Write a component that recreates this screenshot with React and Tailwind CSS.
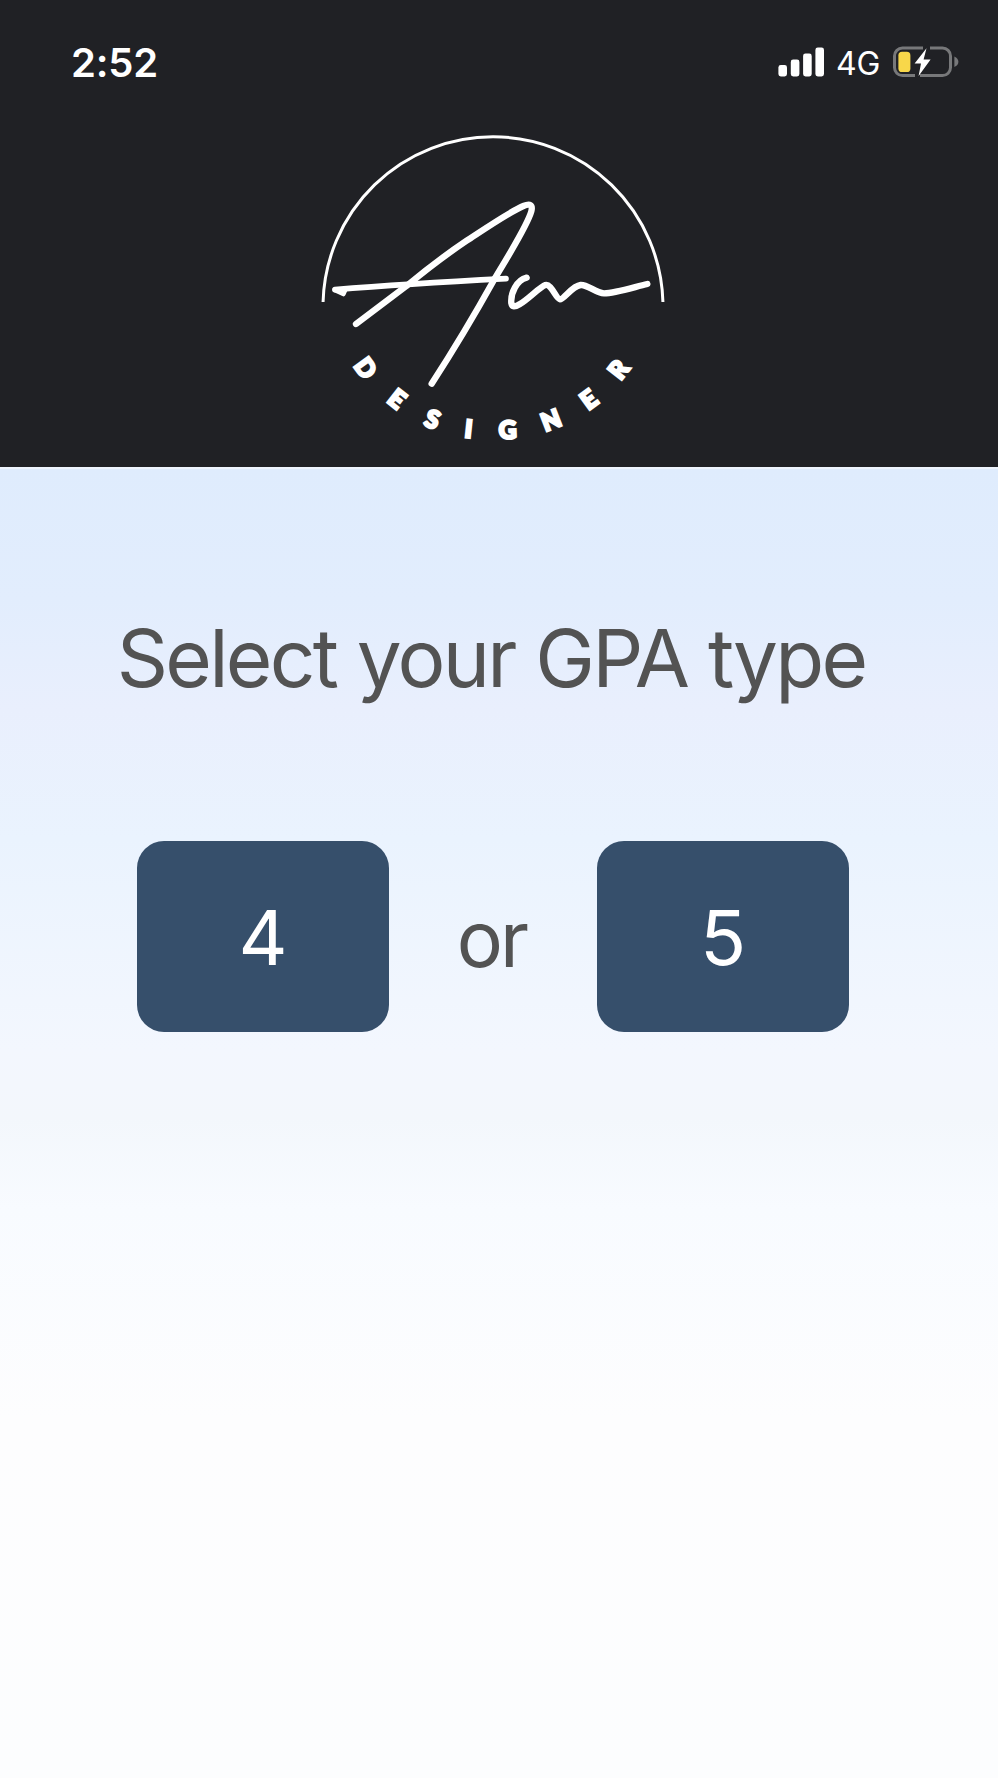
import React, { useState } from "react";

const gpaTypes = ["4", "5"];

const designerLetters = [
  { char: "D", x: 167, y: 744, rotate: 54 },
  { char: "E", x: 261, y: 836, rotate: 38 },
  { char: "S", x: 368, y: 897, rotate: 21 },
  { char: "I", x: 476, y: 926, rotate: 6 },
  { char: "G", x: 593, y: 929, rotate: -2 },
  { char: "N", x: 723, y: 900, rotate: -21 },
  { char: "E", x: 836, y: 838, rotate: -36 },
  { char: "R", x: 925, y: 748, rotate: -52 },
];

const SignalIcon = () => (
  <svg viewBox="0 0 46 30" className="h-[30px] w-[46px]" fill="#fff">
    <rect x="0.4" y="18" width="8.6" height="11.5" rx="2.4" />
    <rect x="12.8" y="12.5" width="8.6" height="17" rx="2.4" />
    <rect x="25.1" y="6.5" width="8.6" height="23" rx="2.4" />
    <rect x="37.4" y="0.5" width="8.6" height="29" rx="2.4" />
  </svg>
);

const BatteryIcon = () => (
  <svg viewBox="0 0 68 34" className="h-[34px] w-[68px]" fill="none">
    <path
      d="M23 30.6H10.5A8 8 0 0 1 2.5 22.6V11A8 8 0 0 1 10.5 3H31M38 3H50.5A8 8 0 0 1 58.5 11V22.6A8 8 0 0 1 50.5 30.6H28"
      stroke="#77787a"
      strokeWidth="3"
    />
    <path d="M62.4 11.5C64.8 12.5 66.4 14.5 66.4 16.8S64.8 21.1 62.4 22Z" fill="#77787a" />
    <rect x="6.4" y="6.8" width="12" height="20.2" rx="3.6" fill="#f8d74a" />
    <path d="M34.5 3.2L22.6 18.6H29L26.6 31L38.6 14.6H31.6Z" fill="#fff" />
  </svg>
);

const StatusBar = () => (
  <div className="flex h-[124px] items-start justify-between pl-[71px] pr-[38px] text-white">
    <span className="mt-[33px] text-[40px] font-semibold leading-[60px] tracking-[-0.2px]">2:52</span>
    <div className="mt-[45px] flex h-[34px] items-center">
      <SignalIcon />
      <span className="mx-[12px] pt-[3px] text-[32px] leading-[34px] tracking-[-0.3px]">4G</span>
      <BatteryIcon />
    </div>
  </div>
);

const Logo = () => (
  <svg viewBox="0 0 1110 1020" className="mx-auto h-[340px] w-[370px]" fill="none" stroke="#fff">
    {/* Upper half circle */}
    <path d="M39.2 546A510 510 0 0 1 1058.8 546" strokeWidth="9" />

    {/* Signature */}
    <g strokeWidth="19" strokeLinecap="round" strokeLinejoin="round">
      <path d="M138 612L288 499C345 452 400 409 470 362C540 316 600 275 640 258C660 250 669 254 664 274C652 318 590 415 554 476C510 555 450 660 365 791" />
      <path d="M75 509Q280 492 588 476" strokeWidth="17" />
      <path d="M74 510L100 522L105 511Z" strokeWidth="14" fill="#fff" />
      <path d="M650 473C620 480 601 520 604 550C606 562 614 562 630 552C655 538 690 500 706 495C724 490 738 537 750 538C762 538 786 498 812 495C832 493 858 519 882 520C915 520 970 502 1012 492" />
    </g>

    {/* DESIGNER along the lower curve */}
    <g
      className="font-['Lato',sans-serif] text-[74px] font-black"
      fill="#fff"
      stroke="#fff"
      strokeWidth="7.5"
      textAnchor="middle"
    >
      {designerLetters.map((l, i) => (
        <text key={i} transform={`translate(${l.x} ${l.y}) rotate(${l.rotate})`} y="27">
          {l.char}
        </text>
      ))}
    </g>
  </svg>
);

const GpaButton = ({ label, selected, onClick }) => (
  <button
    onClick={onClick}
    aria-pressed={selected}
    className="flex h-[191px] w-[252px] items-center justify-center rounded-[27px] bg-[#364f6b] text-[76px] text-white"
  >
    {label}
  </button>
);

const App = () => {
  const [gpaType, setGpaType] = useState(null);

  return (
    <div className="min-h-[1778px] w-[1000px] bg-white pr-[2px] font-['Inter',sans-serif]">
      <header className="h-[467px] bg-[#202125]">
        <StatusBar />
        <div className="-mt-1 pr-[8px]">
          <Logo />
        </div>
      </header>

      <main className="flex h-[1311px] flex-col items-center border-t-2 border-[#eef4fd] bg-[linear-gradient(to_bottom,#dfecfd_0px,#e2edfd_130px,#e9effd_240px,#eaf3fe_370px,#f3f7fe_580px,#f3f7fc_650px,#f8fbff_740px,#fdfdfe_950px,#fcfdfe_1309px)] pr-[12px] text-[#535353]">
        <h1 className="mt-[139px] whitespace-nowrap pr-[4px] text-[80px] leading-[100px] tracking-[-2.75px] [word-spacing:1px]">
          Select your GPA type
        </h1>

        <div className="mt-[133px] flex items-center">
          <GpaButton label={gpaTypes[0]} selected={gpaType === "4"} onClick={() => setGpaType("4")} />
          <span className="w-[208px] pr-[3px] pt-[5px] text-center text-[77px] leading-[100px] tracking-[-2.8px]">
            or
          </span>
          <GpaButton label={gpaTypes[1]} selected={gpaType === "5"} onClick={() => setGpaType("5")} />
        </div>
      </main>
    </div>
  );
};

export default App;
